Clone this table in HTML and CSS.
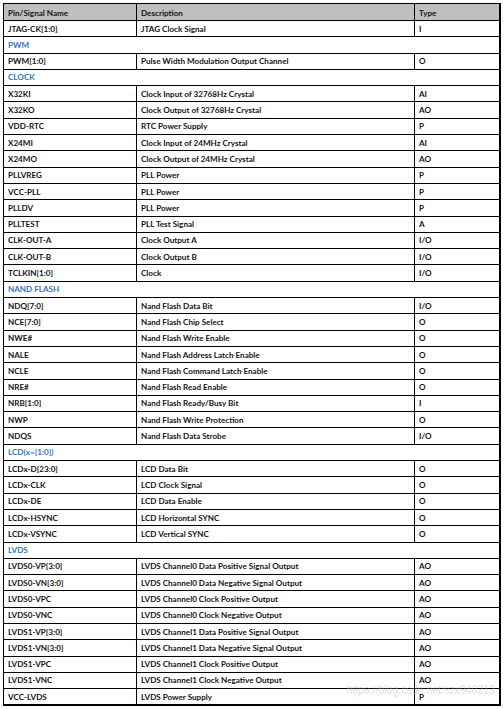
FILE: index.html
```html
<!DOCTYPE html>
<html>
<head>
<meta charset="utf-8">
<link rel="stylesheet" href="styles.css">
</head>
<body>
<div class="page">
<table class="pins">
<colgroup><col class="c1"><col class="c2"><col class="c3"></colgroup>
<thead>
<tr class="head"><th>Pin/Signal Name</th><th>Description</th><th>Type</th></tr>
</thead>
<tbody>
<tr><td>JTAG-CK[1:0]</td><td>JTAG Clock Signal</td><td>I</td></tr>
<tr class="sec"><td colspan="3">PWM</td></tr>
<tr><td>PWM[1:0]</td><td>Pulse Width Modulation Output Channel</td><td>O</td></tr>
<tr class="sec"><td colspan="3">CLOCK</td></tr>
<tr><td>X32KI</td><td>Clock Input of 32768Hz Crystal</td><td>AI</td></tr>
<tr><td>X32KO</td><td>Clock Output of 32768Hz Crystal</td><td>AO</td></tr>
<tr><td>VDD-RTC</td><td>RTC Power Supply</td><td>P</td></tr>
<tr><td>X24MI</td><td>Clock Input of 24MHz Crystal</td><td>AI</td></tr>
<tr><td>X24MO</td><td>Clock Output of 24MHz Crystal</td><td>AO</td></tr>
<tr><td>PLLVREG</td><td>PLL Power</td><td>P</td></tr>
<tr><td>VCC-PLL</td><td>PLL Power</td><td>P</td></tr>
<tr><td>PLLDV</td><td>PLL Power</td><td>P</td></tr>
<tr><td>PLLTEST</td><td>PLL Test Signal</td><td>A</td></tr>
<tr><td>CLK-OUT-A</td><td>Clock Output A</td><td>I/O</td></tr>
<tr><td>CLK-OUT-B</td><td>Clock Output B</td><td>I/O</td></tr>
<tr><td>TCLKIN[1:0]</td><td>Clock</td><td>I/O</td></tr>
<tr class="sec"><td colspan="3">NAND FLASH</td></tr>
<tr><td>NDQ[7:0]</td><td>Nand Flash Data Bit</td><td>I/O</td></tr>
<tr><td>NCE[7:0]</td><td>Nand Flash Chip Select</td><td>O</td></tr>
<tr><td>NWE#</td><td>Nand Flash Write Enable</td><td>O</td></tr>
<tr><td>NALE</td><td>Nand Flash Address Latch Enable</td><td>O</td></tr>
<tr><td>NCLE</td><td>Nand Flash Command Latch Enable</td><td>O</td></tr>
<tr><td>NRE#</td><td>Nand Flash Read Enable</td><td>O</td></tr>
<tr><td>NRB[1:0]</td><td>Nand Flash Ready/Busy Bit</td><td>I</td></tr>
<tr><td>NWP</td><td>Nand Flash Write Protection</td><td>O</td></tr>
<tr><td>NDQS</td><td>Nand Flash Data Strobe</td><td>I/O</td></tr>
<tr class="sec"><td colspan="3">LCD(x=[1:0])</td></tr>
<tr><td>LCDx-D[23:0]</td><td>LCD Data Bit</td><td>O</td></tr>
<tr><td>LCDx-CLK</td><td>LCD Clock Signal</td><td>O</td></tr>
<tr><td>LCDx-DE</td><td>LCD Data Enable</td><td>O</td></tr>
<tr><td>LCDx-HSYNC</td><td>LCD Horizontal SYNC</td><td>O</td></tr>
<tr><td>LCDx-VSYNC</td><td>LCD Vertical SYNC</td><td>O</td></tr>
<tr class="sec"><td colspan="3">LVDS</td></tr>
<tr><td>LVDS0-VP[3:0]</td><td>LVDS Channel0 Data Positive Signal Output</td><td>AO</td></tr>
<tr><td>LVDS0-VN[3:0]</td><td>LVDS Channel0 Data Negative Signal Output</td><td>AO</td></tr>
<tr><td>LVDS0-VPC</td><td>LVDS Channel0 Clock Positive Output</td><td>AO</td></tr>
<tr><td>LVDS0-VNC</td><td>LVDS Channel0 Clock Negative Output</td><td>AO</td></tr>
<tr><td>LVDS1-VP[3:0]</td><td>LVDS Channel1 Data Positive Signal Output</td><td>AO</td></tr>
<tr><td>LVDS1-VN[3:0]</td><td>LVDS Channel1 Data Negative Signal Output</td><td>AO</td></tr>
<tr><td>LVDS1-VPC</td><td>LVDS Channel1 Clock Positive Output</td><td>AO</td></tr>
<tr><td>LVDS1-VNC</td><td>LVDS Channel1 Clock Negative Output</td><td>AO</td></tr>
<tr><td>VCC-LVDS</td><td>LVDS Power Supply</td><td>P</td></tr>
</tbody>
</table>
<div class="watermark">https://blog.csdn.net/szx940213</div>
</div>
</body>
</html>
```
FILE: styles.css
```css
html, body {
  margin: 0;
  padding: 0;
  background: #fff;
}
.page {
  position: relative;
  width: 504px;
  height: 709px;
  padding: 3px 0 0 3px;
  box-sizing: border-box;
  overflow: hidden;
}
.pins {
  border-collapse: collapse;
  table-layout: fixed;
  width: 496px;
  font-family: "Lato", "Liberation Sans", sans-serif;
  font-size: 8.1px;
  font-weight: 700;
  color: #141414;
  border: 2px solid #000;
  border-top-width: 1px;
  border-left-width: 1.5px;
}
.c1 { width: 133px; }
.c2 { width: 278px; }
.c3 { width: 85px; }
.pins th, .pins td {
  border: 1px solid #000;
  height: 16.31px;
  padding: 0 0 0 4px;
  box-sizing: border-box;
  text-align: left;
  vertical-align: middle;
  white-space: nowrap;
  overflow: hidden;
  line-height: 1;
}
.pins th {
  background: #bfbfbf;
  vertical-align: bottom;
  padding-bottom: 3px;
  height: 17px;
}
.pins tr.sec td {
  color: #2f75c0;
}
.pins td:last-child, .pins th:last-child {
  border-right-width: 2px;
}
.watermark {
  position: absolute;
  right: 9px;
  top: 682px;
  font-family: "Liberation Sans", sans-serif;
  font-size: 13.5px;
  line-height: 16px;
  color: rgba(195, 195, 195, 0.55);
  white-space: nowrap;
  transform: scaleX(0.78);
  transform-origin: right center;
  pointer-events: none;
}
```
